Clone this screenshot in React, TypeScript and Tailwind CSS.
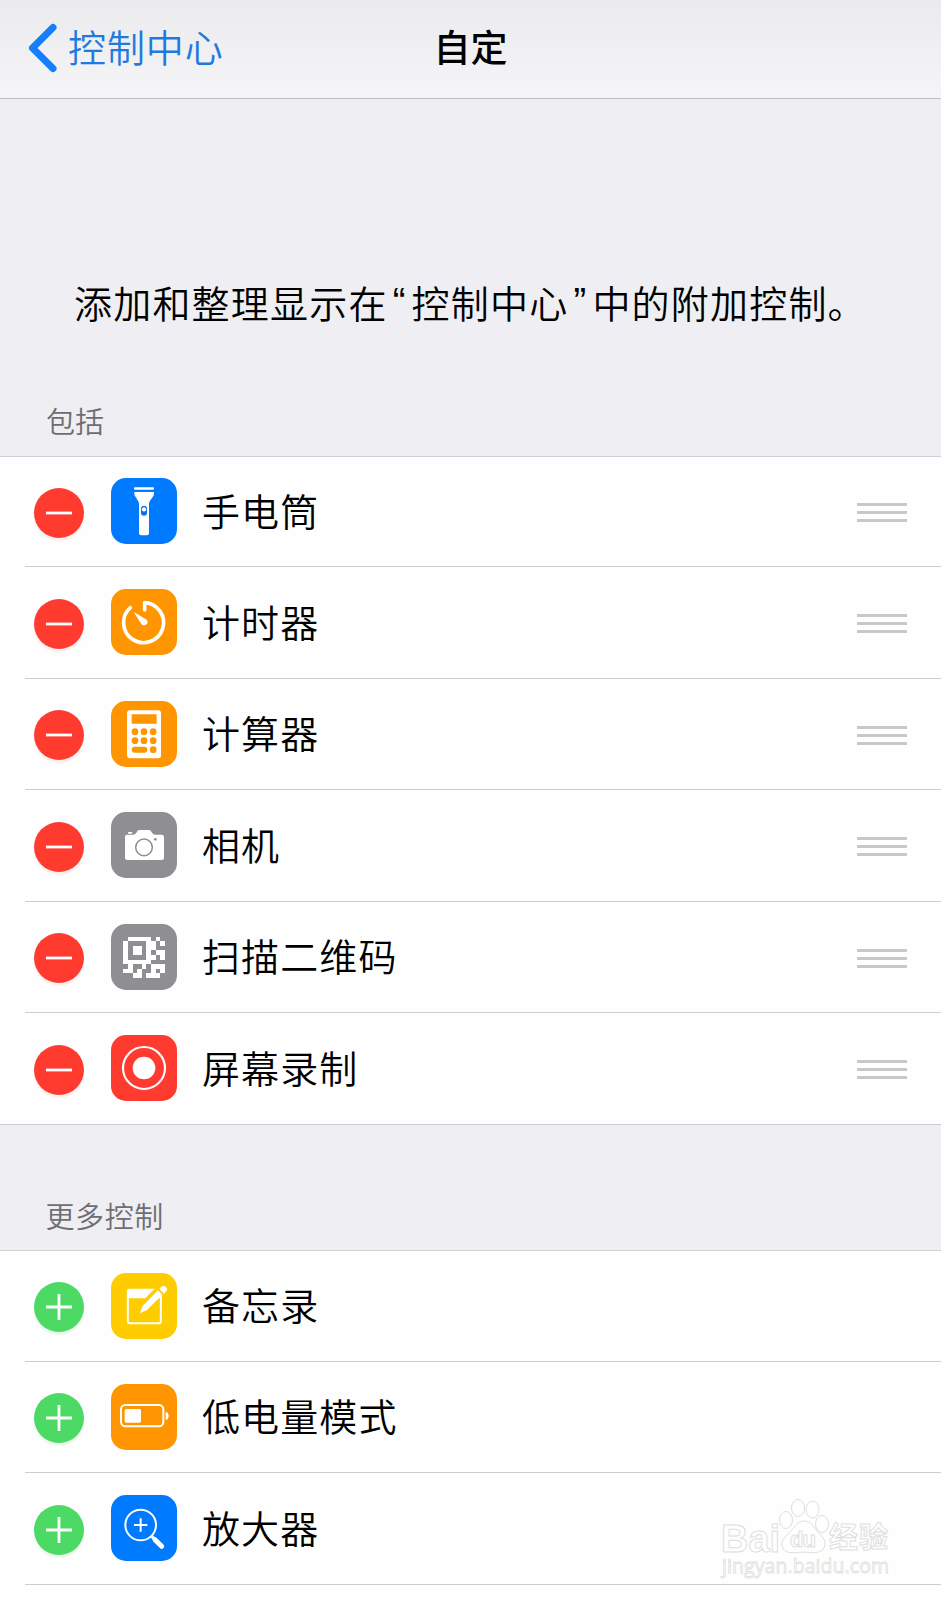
import React from 'react';

type ControlAction = 'remove' | 'add';

interface Control {
  id: string;
  label: string;
  tile: string;
  icon: React.ReactNode;
}

// All glyphs share a 198 x 198 box that covers the whole tile
const QR_ROWS = [
  '011111010',
  '100001101',
  '101101100',
  '101101011',
  '100001101',
  '111111000',
  '010010111',
  '110100101',
  '001101110',
];

const FlashlightIcon = () => (
  <>
    <rect x="69" y="28" width="60" height="7" rx="3" fill="#fff" />
    <path d="M70 42H129V47Q129 53 125 57L117 68Q114 72 114 78V166Q114 172 108 172H90Q84 172 84 166V78Q84 72 81 68L74 57Q70 53 70 47Z" fill="#fff" />
    <rect x="90" y="83" width="18" height="30" rx="9" fill="#0a6fe8" />
    <circle cx="99" cy="94" r="6.5" fill="#fff" />
  </>
);

const TimerIcon = () => (
  <>
    <path d="M101 63V41A60 60 0 1 1 58 56" fill="none" stroke="#fff" strokeWidth="11" strokeLinecap="round" strokeLinejoin="round" />
    <path d="M68 69L107 92A10 10 0 1 1 91 105Z" fill="#fff" />
  </>
);

const CalculatorIcon = () => (
  <>
    <rect x="48" y="28" width="102" height="144" rx="9" fill="#fff" />
    <g fill="#ff9500">
      <rect x="62" y="40" width="75" height="28" rx="2" />
      {[92, 119].map((cy) =>
        [72, 99, 126.5].map((cx) => <circle key={`${cx}-${cy}`} cx={cx} cy={cy} r="10" />)
      )}
      <rect x="62" y="137" width="47" height="18" rx="9" />
      <circle cx="126.5" cy="146" r="10" />
    </g>
  </>
);

const CameraIcon = () => (
  <>
    <path d="M48 68H66Q73 68 76 62Q79 54 85 54H115Q120 54 123 62Q126 68 133 68H152Q159 68 159 75V138Q159 144 152 144H48Q42 144 42 138V75Q42 68 48 68Z" fill="#fff" />
    <rect x="51" y="60" width="13" height="5" rx="2" fill="#fff" />
    <circle cx="99" cy="106" r="25" fill="none" stroke="#8e8e93" strokeWidth="4.5" />
    <circle cx="133" cy="82" r="4" fill="#8e8e93" />
  </>
);

const QrIcon = () => (
  <g fill="#fff" shapeRendering="crispEdges">
    {QR_ROWS.map((row, y) =>
      row.split('').map((cell, x) =>
        cell === '1' ? (
          <rect key={`${x}-${y}`} x={37 + x * 13.8} y={38 + y * 13.8} width="13.8" height="13.8" />
        ) : null
      )
    )}
  </g>
);

const RecordIcon = () => (
  <>
    <circle cx="99" cy="99" r="63" fill="none" stroke="#fff" strokeWidth="6.5" />
    <circle cx="99" cy="99" r="34" fill="#fff" />
  </>
);

const NotesIcon = () => (
  <>
    <rect x="50.5" y="50.5" width="99" height="100" rx="6" fill="none" stroke="#fff" strokeWidth="6" />
    <path d="M48 76V55Q48 48 55 48H145Q152 48 152 55V76Z" fill="#fff" />
    <path d="M86 122L96 100L154 42" fill="none" stroke="#ffcc00" strokeWidth="25" />
    <path d="M86 121L95 99L141 52L154 65L108 111Z" fill="#fff" />
    <path d="M145 48L150 43Q157 35 165 42Q172 49 164 56L159 62Z" fill="#fff" />
  </>
);

const BatteryIcon = () => (
  <>
    <rect x="30" y="63" width="127" height="64" rx="13" fill="none" stroke="#fff" strokeWidth="6" />
    <rect x="41" y="75" width="49" height="41" rx="5" fill="#fff" />
    <path d="M164 83Q173 86 173 95Q173 105 164 108Z" fill="#fff" />
  </>
);

const MagnifierIcon = () => (
  <g fill="none" stroke="#fff">
    <circle cx="89" cy="90" r="46" strokeWidth="6" />
    <path d="M69 90H109M89 70V110" strokeWidth="6" />
    <path d="M123 125L132 134" strokeWidth="10" />
    <path d="M132 134L152 154" strokeWidth="15" strokeLinecap="round" />
  </g>
);

const included: Control[] = [
  { id: 'flashlight', label: '手电筒', tile: 'bg-[#007aff]', icon: <FlashlightIcon /> },
  { id: 'timer', label: '计时器', tile: 'bg-[#ff9500]', icon: <TimerIcon /> },
  { id: 'calculator', label: '计算器', tile: 'bg-[#ff9500]', icon: <CalculatorIcon /> },
  { id: 'camera', label: '相机', tile: 'bg-[#8e8e93]', icon: <CameraIcon /> },
  { id: 'qr', label: '扫描二维码', tile: 'bg-[#8e8e93]', icon: <QrIcon /> },
  { id: 'record', label: '屏幕录制', tile: 'bg-[#ff3b30]', icon: <RecordIcon /> },
];

const more: Control[] = [
  { id: 'notes', label: '备忘录', tile: 'bg-[#ffcc00]', icon: <NotesIcon /> },
  { id: 'battery', label: '低电量模式', tile: 'bg-[#ff9500]', icon: <BatteryIcon /> },
  { id: 'magnifier', label: '放大器', tile: 'bg-[#007aff]', icon: <MagnifierIcon /> },
];

const ActionButton: React.FC<{ action: ControlAction }> = ({ action }) => (
  <button
    className={`mt-[3px] size-[50px] shrink-0 rounded-full ${
      action === 'remove'
        ? 'bg-[#ff3b30] shadow-[0_3px_2px_#fbeeed]'
        : 'bg-[#4cd964] shadow-[0_3px_2px_#e8f7ea]'
    }`}
  >
    <svg viewBox="0 0 50 50" className="size-full" stroke="#fff" strokeWidth="2.8">
      <path d={action === 'remove' ? 'M12 25H38' : 'M12 25H38M25 12V38'} />
    </svg>
  </button>
);

const DragHandle = () => (
  <div className="mt-[3px] flex w-[50px] flex-col gap-[5px]">
    <span className="h-[3px] bg-[#c8c8ca]" />
    <span className="h-[3px] bg-[#c8c8ca]" />
    <span className="h-[3px] bg-[#c8c8ca]" />
  </div>
);

interface ControlListProps {
  controls: Control[];
  action: ControlAction;
}

const ControlList: React.FC<ControlListProps> = ({ controls, action }) => (
  <ul className="bg-[#fefefe]">
    {controls.map((control, index) => {
      const first = index === 0;
      const fullLine = action === 'remove' && index === controls.length - 1;
      return (
        <li
          key={control.id}
          className={`flex h-[111.5px] flex-col ${first ? 'border-t border-[#d0cfd5]' : ''}`}
        >
          <div
            className={`flex flex-1 items-center border-b border-[#cdcdd1] ${
              fullLine ? 'pr-[34px] pl-[33.5px]' : 'ml-[25px] pr-[34px] pl-[8.5px]'
            }`}
          >
            <ActionButton action={action} />
            <div className={`ml-[27.5px] size-[66px] shrink-0 overflow-hidden rounded-[15px] ${control.tile}`}>
              <svg viewBox="0 0 198 198" className="size-full">
                {control.icon}
              </svg>
            </div>
            <span className="mb-[3px] ml-[25px] flex-1 text-[38px] leading-[50px] font-[350] tracking-[1.1px] text-black">
              {control.label}
            </span>
            {action === 'remove' && <DragHandle />}
          </div>
        </li>
      );
    })}
  </ul>
);

const Watermark = () => (
  <svg
    viewBox="0 0 241 130"
    className="absolute right-0 bottom-0 h-[130px] w-[241px]"
    fill="#fefefe"
    stroke="#dedede"
    strokeWidth="1"
  >
    <text x="21" y="82" fontSize="38" fontWeight="700" fontFamily="Liberation Sans" textLength="59" lengthAdjust="spacingAndGlyphs">Bai</text>
    <ellipse cx="86" cy="50" rx="6.5" ry="8.5" />
    <ellipse cx="98" cy="38" rx="6.5" ry="8.5" />
    <ellipse cx="112.5" cy="39.5" rx="6.5" ry="8.5" />
    <ellipse cx="122" cy="54" rx="6.5" ry="8.5" />
    <path d="M104 51C97 51 94 58 90 62C85 67 81 70 82 76C84 84 92 83 103 82C115 83 123 84 125 75C126 69 121 66 117 61C113 56 111 51 104 51Z" />
    <text x="90" y="77" fontSize="22" fontWeight="700" fontFamily="Liberation Sans" textLength="26">du</text>
    <text x="129" y="78" fontSize="29" fontWeight="700" fontFamily="Noto Sans CJK SC" textLength="59">经验</text>
    <text x="22" y="103" fontSize="19.5" fontFamily="Open Sans" textLength="167" strokeWidth="0.8">jingyan.baidu.com</text>
  </svg>
);

export default function App() {
  return (
    <div className="relative h-[1600px] w-[941px] overflow-hidden bg-[#efeef3] font-['Noto_Sans_CJK_SC',sans-serif]">
      <header className="grid h-[99px] grid-cols-3 items-center border-b border-[#bfbec6] bg-linear-to-b from-[#ebebed] to-[#f5f5f7]">
        <button className="flex items-center pl-7 text-[#1f7ae0]">
          <svg viewBox="0 0 30 50" className="mb-[2px] h-[50px] w-[30px]" fill="none" stroke="#147efb" strokeWidth="7" strokeLinecap="round" strokeLinejoin="round">
            <path d="M25 4.5L4.5 25L25 45.5" />
          </svg>
          <span className="mb-[6px] ml-[10px] text-[38px] leading-[50px] font-[350] tracking-[0.9px] whitespace-nowrap">控制中心</span>
        </button>
        <h1 className="mb-[6px] text-center text-[37px] leading-[50px] font-medium text-black">自定</h1>
      </header>

      <p className="mt-[178px] ml-[74px] flex h-[50px] text-[38px] leading-[50px] font-[350] tracking-[1.2px] whitespace-nowrap text-black">
        添加和整理显示在
        <span className="w-[24px] text-center font-['Liberation_Sans']">“</span>
        控制中心
        <span className="w-[24px] text-center font-['Liberation_Sans']">”</span>
        中的附加控制。
      </p>

      <h2 className="mt-[73px] mb-[15.5px] pl-[46px] text-[29px] leading-[40px] font-[350] text-[#6d6d72]">包括</h2>
      <ControlList controls={included} action="remove" />

      <h2 className="mt-[70px] mb-[15.5px] pl-[45.5px] text-[29px] leading-[40px] font-[350] tracking-[0.6px] text-[#6d6d72]">更多控制</h2>
      <ControlList controls={more} action="add" />
      <div className="h-4 bg-[#fefefe]" />

      <Watermark />
    </div>
  );
}
